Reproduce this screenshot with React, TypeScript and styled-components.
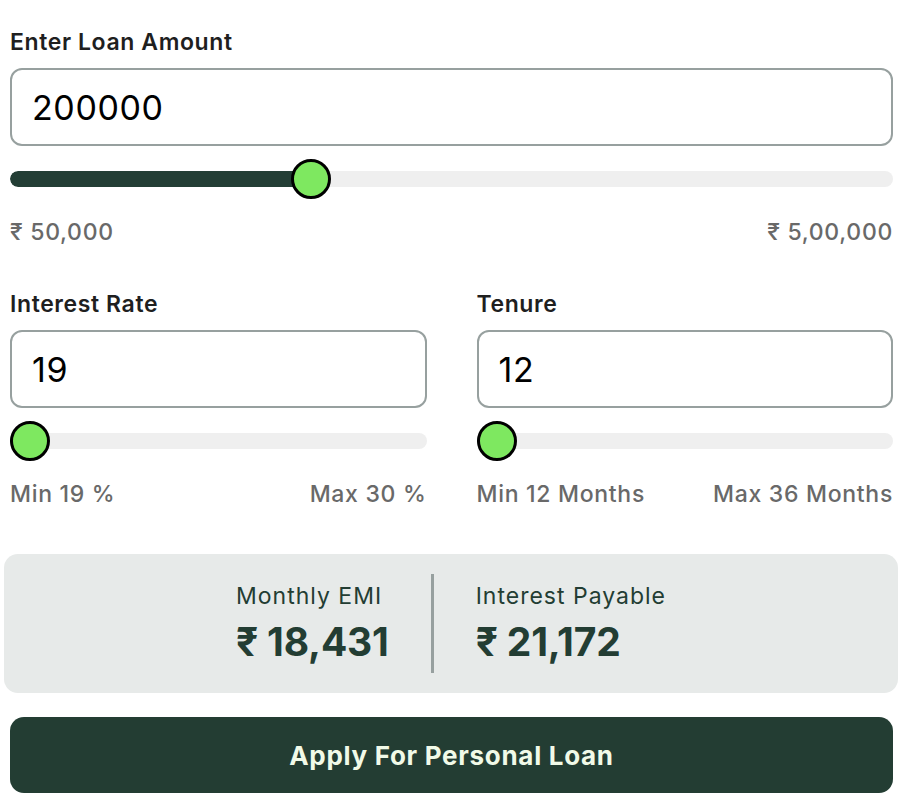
import React from "react";
import styled, { createGlobalStyle } from "styled-components";

const Global = createGlobalStyle`
  html, body { margin: 0; padding: 0; background: #ffffff; }
  body { font-family: Inter, "Noto Sans", "DejaVu Sans", sans-serif; }
  * { box-sizing: border-box; }
`;

const Page = styled.div`
  width: 910px;
  padding: 29px 17px 16px 10px;
  display: flex;
  flex-direction: column;
`;

const Field = styled.div`
  display: flex;
  flex-direction: column;
  min-width: 0;
`;

const Row = styled.div`
  display: grid;
  grid-template-columns: 1fr 1fr;
  column-gap: 50px;
  margin-top: 46px;
`;

const Label = styled.div`
  font-size: 23px;
  line-height: 26px;
  font-weight: 600;
  letter-spacing: 0.6px;
  color: #1f1f1f;
  margin-bottom: 13px;
`;

const InputBox = styled.div`
  height: 78px;
  border: 2px solid #97a09f;
  border-radius: 12px;
  display: flex;
  align-items: center;
  padding: 0 20px;
  font-size: 34px;
  letter-spacing: 0.6px;
  color: #000;
  font-weight: 400;
`;

const SliderWrap = styled.div`
  position: relative;
  height: 40px;
  margin-top: 13px;
  display: flex;
  align-items: center;
`;

const Track = styled.div`
  position: relative;
  width: 100%;
  height: 16px;
  border-radius: 8px;
  background: #efefef;
  overflow: hidden;
`;

const Fill = styled.div`
  height: 100%;
  background: #233e35;
  border-radius: 8px;
`;

const Thumb = styled.div`
  position: absolute;
  top: 0;
  width: 40px;
  height: 40px;
  border-radius: 50%;
  background: #7ee860;
  border: 3.5px solid #000;
`;

const Range = styled.div`
  display: flex;
  justify-content: space-between;
  margin-top: 20px;
  font-size: 23px;
  line-height: 26px;
  font-weight: 500;
  letter-spacing: 0.7px;
  color: #696969;
`;

const Result = styled.div`
  margin: 47px -5px 0 -6px;
  height: 139px;
  background: #e7eae9;
  border-radius: 14px;
  display: flex;
  justify-content: center;
  align-items: center;
  color: #233d33;
`;

const Stat = styled.div`
  display: flex;
  flex-direction: column;
  gap: 9px;
`;

const StatLabel = styled.div`
  font-size: 23px;
  line-height: 28px;
  font-weight: 400;
  letter-spacing: 1px;
`;

const StatValue = styled.div`
  font-size: 39px;
  line-height: 46px;
  font-weight: 700;
  letter-spacing: -0.2px;
`;

const Divider = styled.div`
  width: 3px;
  height: 99px;
  background: #97a09f;
  margin: 0 42px;
`;

const Button = styled.button`
  margin-top: 24px;
  height: 76px;
  border: none;
  border-radius: 14px;
  background: #233d33;
  color: #f1fae8;
  font-family: inherit;
  font-size: 26px;
  font-weight: 700;
  letter-spacing: 0.7px;
  cursor: pointer;
`;

function Slider({ value, min, max }: { value: number; min: number; max: number }) {
  const f = (value - min) / (max - min);
  const thumb = 40;
  return (
    <SliderWrap>
      <Track>
        <Fill style={{ width: `calc(${thumb / 2}px + (100% - ${thumb}px) * ${f})` }} />
      </Track>
      <Thumb style={{ left: `calc((100% - ${thumb}px) * ${f})` }} />
    </SliderWrap>
  );
}

export default function App() {
  return (
    <>
      <Global />
      <Page>
        <Field>
          <Label>Enter Loan Amount</Label>
          <InputBox>200000</InputBox>
          <Slider value={200000} min={50000} max={500000} />
          <Range>
            <span>₹ 50,000</span>
            <span>₹ 5,00,000</span>
          </Range>
        </Field>
        <Row>
          <Field>
            <Label>Interest Rate</Label>
            <InputBox>19</InputBox>
            <Slider value={19} min={19} max={30} />
            <Range>
              <span>Min 19 %</span>
              <span>Max 30 %</span>
            </Range>
          </Field>
          <Field>
            <Label>Tenure</Label>
            <InputBox>12</InputBox>
            <Slider value={12} min={12} max={36} />
            <Range>
              <span>Min 12 Months</span>
              <span>Max 36 Months</span>
            </Range>
          </Field>
        </Row>
        <Result>
          <Stat>
            <StatLabel>Monthly EMI</StatLabel>
            <StatValue>₹ 18,431</StatValue>
          </Stat>
          <Divider />
          <Stat>
            <StatLabel>Interest Payable</StatLabel>
            <StatValue>₹ 21,172</StatValue>
          </Stat>
        </Result>
        <Button>Apply For Personal Loan</Button>
      </Page>
    </>
  );
}
